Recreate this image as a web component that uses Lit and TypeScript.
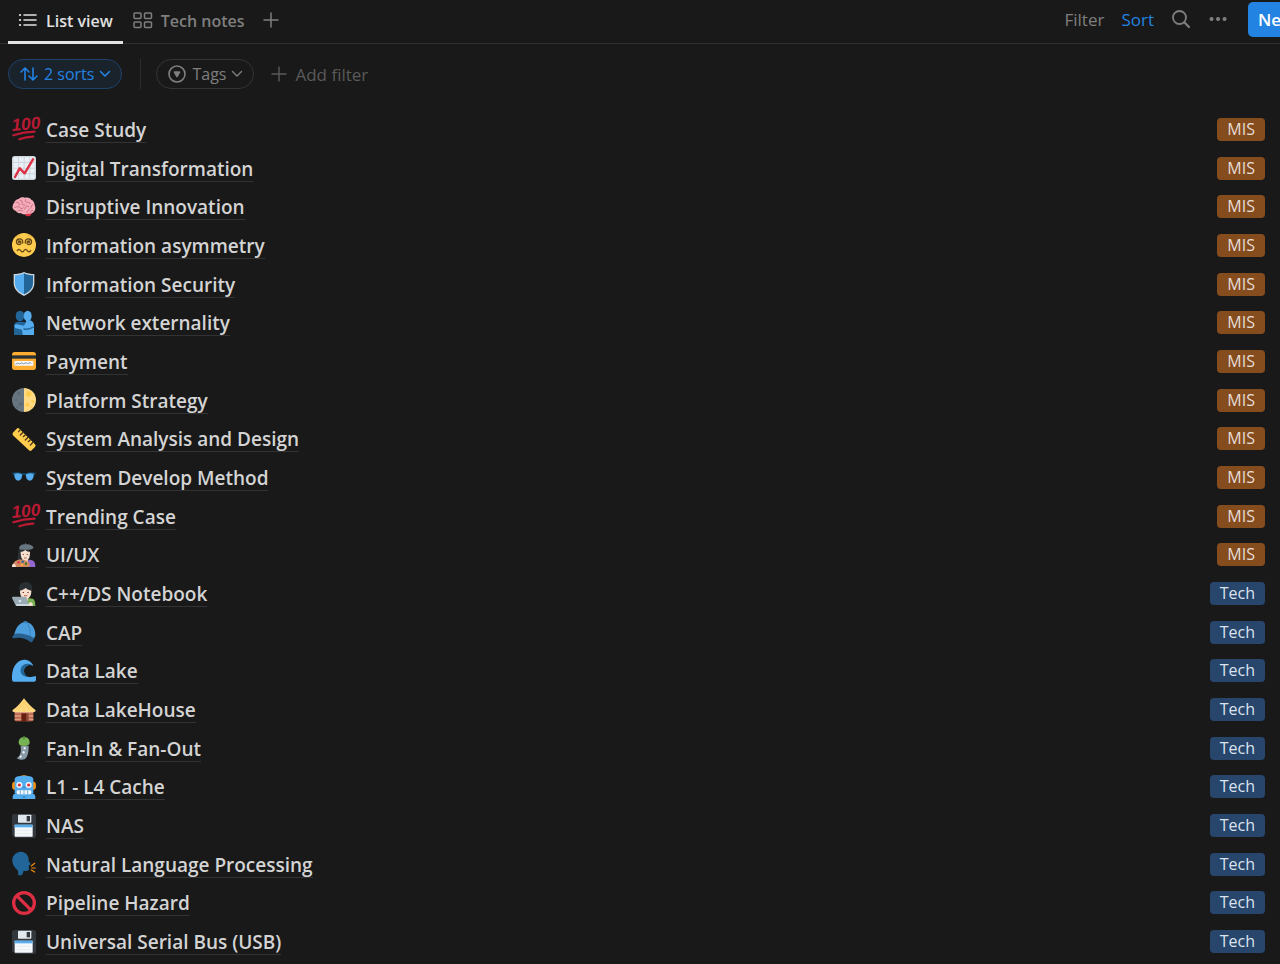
import { LitElement, html, svg, css, type SVGTemplateResult } from "lit";
import { customElement, property } from "lit/decorators.js";

const ICONS: Record<string, SVGTemplateResult> = {
  hundred: svg`
    <text x="0" y="21" transform="rotate(-5 0 21)" font-family="Liberation Sans Narrow, Liberation Sans, sans-serif" font-size="26" font-weight="700" font-style="italic" fill="#bb1a34">100</text>
    <path d="M2 27.5Q17 22.5 34 22M11 33.5Q21 30 32 29.5" fill="none" stroke="#bb1a34" stroke-width="3.2" stroke-linecap="round"/>`,
  chart: svg`
    <rect width="36" height="36" rx="4" fill="#ccd6dd"/>
    <path d="M2 2h7v7H2zM10.5 2h7v7h-7zM19 2h7v7h-7zM27.5 2H34v7h-6.5zM2 10.5h7v7H2zM10.5 10.5h7v7h-7zM19 10.5h7v7h-7zM27.5 10.5H34v7h-6.5zM2 19h7v7H2zM10.5 19h7v7h-7zM19 19h7v7h-7zM27.5 19H34v7h-6.5zM2 27.5h7V34H2zM10.5 27.5h7V34h-7zM19 27.5h7V34h-7zM27.5 27.5H34V34h-6.5z" fill="#e9eff4"/>
    <path d="M4.5 31.5L11.5 18.5L19 26L31.5 5" fill="none" stroke="#dd2e44" stroke-width="3.6" stroke-linecap="round" stroke-linejoin="round"/>`,
  brain: svg`
    <path d="M21 27c3-1 8-1 8 1 0 3-3 4-6 4-2 0-4-3-2-5z" fill="#dd2e44"/>
    <path d="M3 12C4 8 8 6 10 6c2-3 7-3 9-2 4-1 8 0 10 3 3 1 5 5 5 8 2 4 1 9-2 11-3 3-7 2-9 2-4 2-8 1-10-1-3 1-6-1-7-3-4-1-6-4-5-7 0-2 1-4 2-5z" fill="#f4abba"/>
    <path d="M6 11c3-1 5 1 5 4M4 19c3-2 6-2 8 0s4 2 5 0M12 8c2-1 4 1 3 4s3 4 5 3M20 7c-1 3 1 4 3 4s4-1 4 2M25 17c-3-1-6 1-6 4M31 14c-2 1-1 4-4 6s-2 5-5 6M9 23c3 1 5-1 7 1M31 23c-2 0-3 1-3 3" fill="none" stroke="#c26b80" stroke-width="1.3" stroke-linecap="round"/>`,
  dizzy: svg`
    <circle cx="18" cy="18" r="18" fill="#ffcc4d"/>
    <path d="M11 14.5c-1.5 0-2-2 0-2.5 3 0 3.5 5 0 5.5-5 0-6-7-1-8.5 4-.8 7 2 6 6M25 14.5c1.5 0 2-2 0-2.5-3 0-3.5 5 0 5.5 5 0 6-7 1-8.5-4-.8-7 2-6 6M8 26.500c1.5-2.5 3-2.5 5 0s3.5 2.5 5 0 3.5-2.5 5 0 3.5 2.5 5 0" fill="none" stroke="#65471b" stroke-width="2" stroke-linecap="round"/>
    <path d="M6 6.5q2-3 6-3M30 6.5q-2-3-6-3" fill="none" stroke="#e0a63c" stroke-width="1.2"/>`,
  shield: svg`
    <path d="M18 0c5 2.500 10 3 15.500 3v14c0 8-6 15-15.500 19C8.500 32 2.500 25 2.500 17V3C8 3 13 2.500 18 0z" fill="#ccd6dd"/>
    <path d="M18 2v31.500C10 30 4.500 24.500 4.500 16.500V5C9 5 13.500 4.300 18 2z" fill="#55acee"/>
    <path d="M18 2v31.500c8-3.500 13.500-9 13.500-17V5C27 5 22.500 4.300 18 2z" fill="#269"/>`,
  hug: svg`
    <path d="M3 36V22c0-4 3-6 7-6h9l4 20z" fill="#269"/>
    <ellipse cx="12" cy="7.5" rx="6.5" ry="8" fill="#269"/>
    <path d="M16 36l-1-8-9-2c-3-1-3-6 1-6l11 2 4-8c7-1 11 2 11 8v14z" fill="#55acee"/>
    <ellipse cx="23.5" cy="7.5" rx="6" ry="8" fill="#55acee"/>
    <path d="M18 27c5 1 8 1 14-3" fill="none" stroke="#269" stroke-width="2" stroke-linecap="round"/>`,
  card: svg`
    <rect y="4.5" width="36" height="27" rx="4" fill="#ffac33"/>
    <path d="M0 9.500h36v5H0z" fill="#292f33"/>
    <rect x="3.5" y="18" width="28.5" height="7" rx="1" fill="#f4f7f9"/>
    <path d="M5 23l4-2 2 1.500 4-2 2 2 4-2 2 1.500 4-1.500 2 1" fill="none" stroke="#8899a6" stroke-width="1.5"/>`,
  moon: svg`
    <path d="M18 0a18 18 0 0 0 0 36z" fill="#66757f"/>
    <path d="M18 0a18 18 0 0 1 0 36z" fill="#ffd983"/>
    <g fill="#5b6876"><circle cx="10" cy="8" r="2.5"/><circle cx="6" cy="18" r="2"/><circle cx="13" cy="24" r="3"/><circle cx="8" cy="29" r="1.5"/></g>
    <g fill="#ffcc4d"><circle cx="25" cy="9" r="4"/><circle cx="31" cy="20" r="2"/><circle cx="23" cy="25" r="3"/><circle cx="29" cy="28" r="1.5"/></g>`,
  ruler: svg`
    <path d="M1 9L7 2.5q2-2 4 0L34.500 26q2 2 0 4l-5 5q-2 2-4 0L1 12z" fill="#ffcc4d"/>
    <path d="M12.500 4L10 7M16.500 8l-4 4M20 11.500l-3 3M24 15.500l-4 4M27.500 19l-3 3M31.500 23l-4 4" stroke="#4a3817" stroke-width="2" stroke-linecap="round"/>`,
  glasses: svg`
    <path d="M0 11.500q9-2 15 1 3-1 6 0 6-3 15-1l-.5 2.500-2 .5-1 4H3.500l-1-4-2-.5z" fill="#174868"/>
    <path d="M3.500 13q6-1.500 11.500 1 .5 9-5.500 9.500-6 0-6-10.500zM32.500 13q-6-1.500-11.500 1-.5 9 5.500 9.500 6 0 6-10.500z" fill="#55acee"/>
    <path d="M15.800 15.500q2-1.500 4.400 0L21 22h-6z" fill="#191919"/>`,
  artist: svg`
    <path d="M9 30C8 22 9 10 12 8h12c4 4 3 15 4 21z" fill="#292f33"/>
    <path d="M18 36v-5c3-5 8-6 12-5 4 1 5 5 5 10z" fill="#9266cc"/>
    <path d="M16 22h8v6c-2 3-6 3-8 0z" fill="#e8c6b4"/>
    <path d="M13 13c3 0 5-1 7-3 1 2 4 3 7 3 0 9-2 13-7 13s-7-4-7-13z" fill="#f7dece"/>
    <path d="M11 9C10 4 15 2 20 2V0h1v2c7 0 12 3 11 6-2 2-4 2-7 2h-9c-3 0-4 0-5-1z" fill="#66757f"/>
    <path d="M17 17v1M23 17v1" stroke="#662113" stroke-width="1.8"/><path d="M18 22.500h4" stroke="#c1694f" stroke-width="1.5"/>
    <path d="M2 31c1-4 8-7 13-6 6 0 12 4 12 8 0 2-1 3-4 3H4c1-2 0-3-2-5z" fill="#cf8a62"/>
    <g><circle cx="10" cy="29" r="1.8" fill="#dd2e44"/><circle cx="16" cy="28" r="1.8" fill="#269"/><circle cx="21" cy="31" r="1.8" fill="#3e721d"/><circle cx="15" cy="33" r="1.8" fill="#ffac33"/></g>
    <path d="M0 34c0-3 3-4 5-2l1 4H0z" fill="#f7dece"/>`,
  coder: svg`
    <path d="M10 36v-6c3-5 15-7 21-5 3 1 4 5 4 11z" fill="#77b255"/>
    <path d="M16 21h8v6c-2 3-6 3-8 0z" fill="#e8c6b4"/>
    <path d="M11 13C9 4 15 0 21 0s11 5 9 13l-2 4H13z" fill="#292f33"/>
    <path d="M12 13c5-1 7-3 9-4 2 3 5 3 8 4 0 8-3 12-8.500 12S12 21 12 13z" fill="#f7dece"/>
    <path d="M17 15v1.500M24 15v1.500" stroke="#662113" stroke-width="1.8"/><path d="M18 20.500h5" stroke="#c1694f" stroke-width="1.5"/>
    <path d="M2 22h18q1.500 0 2 1.500L25 36H6L0 24q0-2 2-2z" fill="#9aaab4"/>
    <path d="M6 33h20v3H7z" fill="#ccd6dd"/><circle cx="12" cy="28.500" r="2" fill="#e1e8ed"/>
    <path d="M25 32q3-3 6 0v4h-5z" fill="#f7dece"/>`,
  cap: svg`
    <path d="M3 24C5 11 12 3 20 3c8 0 15 8 15 19 0 2-1 4-2 6z" fill="#4c9ddb"/>
    <path d="M20 3c6 4 8 12 7 22" fill="none" stroke="#3580bb" stroke-width="1.2"/>
    <path d="M5 20.500c8-1 16 0 28 6-1 5-3 7-5 7-7-6-15-8-26-6-3-1-1-5 3-7z" fill="#28618f"/>
    <ellipse cx="20" cy="3" rx="3" ry="1.4" fill="#3580bb"/>`,
  wave: svg`
    <path d="M0 31C-1 14 6 2 18 1c7 0 12 4 14 9-7-3-14 1-14 8 0 6 4 9 8 9 4 0 7-2 10-1v5q0 3-3 3H3q-3 0-3-3z" fill="#55acee"/>
    <path d="M32 10c-8-5-15-3-18 2-4 8 2 16 12 15-5-1-8-5-8-9 0-7 7-11 14-8z" fill="#269"/>`,
  hut: svg`
    <path d="M4 19h28v14q0 2-2 2H6q-2 0-2-2z" fill="#c1694f"/>
    <path d="M4 20h28v3H4zM4 26h28v2H4zM4 31h28v2H4z" fill="#d99e82"/>
    <path d="M14 23h8v12h-8z" fill="#662113"/><path d="M22 23h3v12h-3z" fill="#8a4b38"/>
    <path d="M17 2l1-2 1 2c4 5 9 11 16 16 1 2 0 3-2 3H3c-2 0-3-1-2-3C9 13 13 7 17 2z" fill="#ffd983"/>
    <path d="M17 5l-7 14M18 5v15M19 5l7 14M13 10l-8 8M24 10l7 8" stroke="#ffc24d" stroke-width="1"/>`,
  fan: svg`
    <path d="M13 15h12c0 9-1 16-6 20-4 1-9 1-12-2 6-3 7-9 6-18z" fill="#8899a6"/>
    <path d="M19 17v3M18 23l-1 3M14 30l-2 2" stroke="#f5f8fa" stroke-width="3"/>
    <path d="M17 2l1-2 1.500 2c5 0 7 4 7 8 0 3-3 5-8.500 5s-8-2-8-5c0-4 2-8 7-8z" fill="#77b255"/>
    <path d="M18 0v5" stroke="#3e721d" stroke-width="1.5"/>`,
  robot: svg`
    <ellipse cx="3.500" cy="16" rx="3.5" ry="6" fill="#f4900c"/><ellipse cx="32.5" cy="16" rx="3.5" ry="6" fill="#f4900c"/>
    <path d="M9 4q9-7 18 0z" fill="#ffac33"/>
    <path d="M4 7q0-4 5-5 9-2 18 0 5 1 5 5v21H4z" fill="#55acee"/>
    <path d="M1 36v-3q0-5 5-5h24q5 0 5 5v3z" fill="#55acee"/>
    <circle cx="11" cy="15" r="4.5" fill="#f5f8fa"/><circle cx="25" cy="15" r="4.5" fill="#f5f8fa"/>
    <circle cx="11" cy="15" r="2.4" fill="#dd2e44"/><circle cx="25" cy="15" r="2.4" fill="#dd2e44"/>
    <rect x="7" y="23" width="22" height="6" rx="2" fill="#f5f8fa"/><path d="M12.5 23v6M18 23v6M23.5 23v6" stroke="#3b88c3" stroke-width="1"/>
    <path d="M15 20l3-3 3 3zM14 32h8l-4 3z" fill="#3b88c3"/>`,
  floppy: svg`
    <path d="M3 0h30q3 0 3 3v30q0 3-3 3H5l-5-4V3q0-3 3-3z" fill="#31373d"/>
    <rect x="9" y="1" width="20" height="12" rx="1" fill="#e1e8ed"/><path d="M22 3h5v8h-5z" fill="#31373d"/>
    <rect x="4" y="16" width="27" height="18" rx="1" fill="#f5f8fa"/><path d="M4 16h27v4H4z" fill="#55acee"/>
    <path d="M7 24.5h21M7 29.5h21" stroke="#dde4e9" stroke-width="1"/>`,
  speaking: svg`
    <path d="M9 34c1-4 0-7-4-10C0 18-1 10 3 5 8-2 19-2 23 5c2 3 2 6 2 9l3 4c0 1-1 2-3 2l.5 6c-1 3-5 3-8 2-1 2-1 4-2 6q-3 2-6.500 0z" fill="#269"/>
    <path d="M29 21l5-4M30 24h5M29 27l5 3" stroke="#f4900c" stroke-width="1.8" stroke-linecap="round"/>`,
  forbidden: svg`
    <circle cx="18" cy="18" r="15.5" fill="none" stroke="#dd2e44" stroke-width="5"/>
    <path d="M7 7l22 22" stroke="#dd2e44" stroke-width="5"/>`,
};

type Page = { icon: string; title: string; tag: "MIS" | "Tech" };

const PAGES: Page[] = [
  { icon: "hundred", title: "Case Study", tag: "MIS" },
  { icon: "chart", title: "Digital Transformation", tag: "MIS" },
  { icon: "brain", title: "Disruptive Innovation", tag: "MIS" },
  { icon: "dizzy", title: "Information asymmetry", tag: "MIS" },
  { icon: "shield", title: "Information Security", tag: "MIS" },
  { icon: "hug", title: "Network externality", tag: "MIS" },
  { icon: "card", title: "Payment", tag: "MIS" },
  { icon: "moon", title: "Platform Strategy", tag: "MIS" },
  { icon: "ruler", title: "System Analysis and Design", tag: "MIS" },
  { icon: "glasses", title: "System Develop Method", tag: "MIS" },
  { icon: "hundred", title: "Trending Case", tag: "MIS" },
  { icon: "artist", title: "UI/UX", tag: "MIS" },
  { icon: "coder", title: "C++/DS Notebook", tag: "Tech" },
  { icon: "cap", title: "CAP", tag: "Tech" },
  { icon: "wave", title: "Data Lake", tag: "Tech" },
  { icon: "hut", title: "Data LakeHouse", tag: "Tech" },
  { icon: "fan", title: "Fan-In & Fan-Out", tag: "Tech" },
  { icon: "robot", title: "L1 - L4 Cache", tag: "Tech" },
  { icon: "floppy", title: "NAS", tag: "Tech" },
  { icon: "speaking", title: "Natural Language Processing", tag: "Tech" },
  { icon: "forbidden", title: "Pipeline Hazard", tag: "Tech" },
  { icon: "floppy", title: "Universal Serial Bus (USB)", tag: "Tech" },
];

@customElement("page-row")
class PageRow extends LitElement {
  @property({ attribute: false }) page!: Page;

  static styles = css`
    :host { display: flex; align-items: center; gap: 10px; padding: 0 15px 0 12px; }
    .icon { flex: none; width: 24px; height: 24px; overflow: visible; }
    .title {
      color: #d4d4d4; text-decoration: none; white-space: nowrap;
      font-size: 19px; font-weight: 600; line-height: 24px;
      padding-top: 2px; border-bottom: 1px solid #333;
    }
    .tag {
      margin-left: auto; padding: 0 10px; border-radius: 4px;
      font-size: 16px; line-height: 23px; color: #e6ddd7; background: #854c1d;
    }
    .tag.tech { color: #dbe3ee; background: #28456c; }
  `;

  render() {
    const { icon, title, tag } = this.page;
    return html`
      <svg class="icon" viewBox="0 0 36 36" aria-hidden="true">${ICONS[icon]}</svg>
      <a class="title" href="#">${title}</a>
      <span class="tag ${tag.toLowerCase()}">${tag}</span>
    `;
  }
}

@customElement("app-root")
class AppRoot extends LitElement {
  static styles = css`
    :host {
      display: flex; flex-direction: column; min-height: 100vh; box-sizing: border-box;
      padding-bottom: 3px; background: #191919; color: #7f7f7f;
      font-family: "Open Sans", "Noto Sans", sans-serif; font-size: 16px;
    }
    button { font: inherit; color: inherit; background: none; border: 0; margin: 0; padding: 0; cursor: pointer; display: flex; align-items: center; white-space: nowrap; }
    svg { flex: none; fill: none; stroke: currentColor; stroke-linecap: round; stroke-linejoin: round; }
    .header { display: flex; height: 43px; padding-left: 8px; border-bottom: 1px solid #2f2f2f; }
    .tabs { display: flex; flex: 1; align-items: stretch; }
    .tab { gap: 8px; padding: 0 10px; height: 44px; box-sizing: border-box; font-weight: 600; border-bottom: 3px solid transparent; }
    .tab.active { color: #e1e1e1; border-color: #e1e1e1; }
    .add { padding: 0 8px 4px; }
    .actions { display: flex; align-items: center; gap: 17px; padding-bottom: 4px; font-size: 17px; }
    .sort { color: #2383e2; }
    .new-slot { width: 32px; height: 35px; overflow: hidden; margin-left: 3px; }
    .new { height: 35px; padding: 0 10px; border-radius: 5px; background: #2383e2; color: #fff; font-weight: 600; }
    .filters { display: flex; align-items: center; height: 30px; padding: 15px 8px 21px; }
    .pill { height: 30px; box-sizing: border-box; padding: 0 10px; gap: 5px; border: 1px solid #343434; border-radius: 15px; }
    .pill.sorts { color: #2383e2; background: #1a222b; border-color: #1d436b; }
    .rule { width: 1px; height: 30px; margin: 0 15px 0 18px; background: #2c2c2c; }
    .add-filter { gap: 8px; margin-left: 17px; color: #5a5a5a; font-size: 17px; }
    .list { flex: 1; display: grid; grid-auto-rows: 1fr; margin: 0; padding: 0; list-style: none; }
    .item { display: grid; }
  `;

  render() {
    return html`
      <header class="header">
        <nav class="tabs">
          <button class="tab active">
            <svg width="20" height="20" viewBox="0 0 20 20" stroke-width="1.6"><path d="M6 4h12M6 9h12M6 14h12"/><path d="M2 4h.1M2 9h.1M2 14h.1" stroke-width="2.2"/></svg>
            List view
          </button>
          <button class="tab">
            <svg width="20" height="20" viewBox="0 0 20 20" stroke-width="1.5"><rect x="1" y="2" width="7" height="5.5" rx="1"/><rect x="11.5" y="2" width="7" height="5.5" rx="1"/><rect x="1" y="11" width="7" height="5.5" rx="1"/><rect x="11.5" y="11" width="7" height="5.5" rx="1"/></svg>
            Tech notes
          </button>
          <button class="add" aria-label="Add view">
            <svg width="16" height="16" viewBox="0 0 16 16" stroke-width="1.5"><path d="M8 1v14M1 8h14"/></svg>
          </button>
        </nav>
        <div class="actions">
          <button>Filter</button>
          <button class="sort">Sort</button>
          <button aria-label="Search">
            <svg width="20" height="20" viewBox="0 0 20 20" stroke-width="1.8"><circle cx="8.5" cy="7.5" r="6.5"/><path d="M13.5 12.5l4.500 4.500" stroke-width="2.2"/></svg>
          </button>
          <button aria-label="More">
            <svg width="20" height="20" viewBox="0 0 20 20" stroke-width="4"><path d="M3.5 9h.1M10 9h.1M16.5 9h.1"/></svg>
          </button>
          <div class="new-slot"><button class="new">New</button></div>
        </div>
      </header>
      <div class="filters">
        <button class="pill sorts">
          <svg width="20" height="18" viewBox="0 0 20 18" stroke-width="1.6"><path d="M6 15V3M2 7l4-4 4 4M14 3v12M10 11l4 4 4-4"/></svg>
          2 sorts
          <svg width="12" height="12" viewBox="0 0 12 12" stroke-width="1.6"><path d="M1.5 3.5L6 8l4.500-4.500"/></svg>
        </button>
        <span class="rule"></span>
        <button class="pill">
          <svg width="20" height="20" viewBox="0 0 20 20" stroke-width="1.6"><circle cx="10" cy="10" r="8"/><path d="M7.5 8h5L10 12.500z" fill="currentColor"/></svg>
          Tags
          <svg width="12" height="12" viewBox="0 0 12 12" stroke-width="1.4"><path d="M1.5 3.5L6 8l4.500-4.500"/></svg>
        </button>
        <button class="add-filter">
          <svg width="16" height="16" viewBox="0 0 16 16" stroke-width="1.4"><path d="M8 1v14M1 8h14"/></svg>
          Add filter
        </button>
      </div>
      <ul class="list">
        ${PAGES.map((page) => html`<li class="item"><page-row .page=${page}></page-row></li>`)}
      </ul>
    `;
  }
}
